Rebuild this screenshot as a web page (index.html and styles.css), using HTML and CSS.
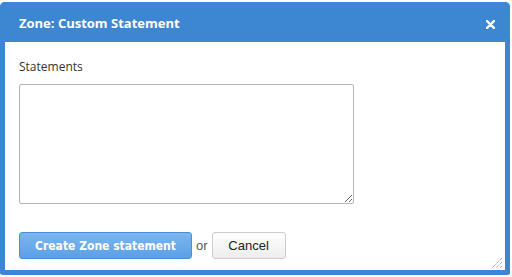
FILE: index.html
```html
<!DOCTYPE html>
<html lang="en">
<head>
    <meta charset="UTF-8">
    <title>Zone: Custom Statement</title>
    <link rel="stylesheet" href="styles.css">
</head>
<body>
    <div class="dialog">
        <div class="dialog-header">
            <span class="dialog-title">Zone: Custom Statement</span>
            <a class="dialog-close" title="Close">
                <svg width="9" height="9" viewBox="0 0 9 9"><path d="M1 1L8 8M8 1L1 8" stroke="#fff" stroke-width="2.4" stroke-linecap="round"/></svg>
            </a>
        </div>
        <div class="dialog-body">
            <label class="field-label" for="statements">Statements</label>
            <textarea id="statements" class="statements"></textarea>
            <div class="actions">
                <button class="btn-primary">Create Zone statement</button>
                <span class="or">or</span>
                <button class="btn-cancel">Cancel</button>
            </div>
            <!-- resize grip in the corner -->
            <svg class="grip" width="12" height="12" viewBox="0 0 12 12">
                <path d="M11 1L1 11M11 5L5 11M11 9L9 11" stroke="#888" stroke-width="1" stroke-dasharray="1 1"/>
            </svg>
        </div>
    </div>
</body>
</html>
```

FILE: styles.css
```css
:root {
    --dialog-blue: #3d87d2;
    --text-color: #333;
}

body {
    margin: 0;
    padding-top: 2px;
    background: #fff;
    font-family: 'Open Sans', sans-serif;
}

.dialog {
    width: 510px;
    height: 273px;
    box-sizing: border-box;
    border: 5px solid var(--dialog-blue);
    border-top: 0;
    border-radius: 5px 5px 3px 3px;
    display: flex;
    flex-direction: column;
    background: #fff;
}

.dialog-header {
    height: 40px;
    background: var(--dialog-blue);
    display: flex;
    align-items: center;
    justify-content: space-between;
    padding: 1px 15px 0 19px;
    box-sizing: border-box;
    margin: 0 -5px;
    border-radius: 5px 5px 0 0;
}

.dialog-title {
    color: #fff;
    font-weight: 700;
    font-size: 13px;
}

.dialog-close {
    display: flex;
    margin-top: 3px;
    cursor: pointer;
}

.dialog-body {
    flex: 1;
    position: relative;
    padding: 17px 14px 0;
    display: flex;
    flex-direction: column;
    align-items: flex-start;
}

.field-label {
    font-size: 12px;
    color: var(--text-color);
    line-height: 16px;
}

.statements {
    margin-top: 9px;
    width: 335px;
    height: 120px;
    box-sizing: border-box;
    border: 1px solid #b5b5b5;
    border-radius: 2px;
}

.actions {
    margin-top: 28px;
    display: flex;
    align-items: center;
}

.btn-primary {
    width: 173px;
    height: 27px;
    border: 1px solid #4a8fd6;
    border-radius: 3px;
    background: linear-gradient(#7bb6ef, #5aa0e6);
    color: #fff;
    font-family: 'DejaVu Sans Condensed', 'DejaVu Sans', sans-serif;
    font-weight: 700;
    font-size: 12px;
    cursor: pointer;
}

.or {
    margin: 0 4px 0 4px;
    font-family: 'Liberation Sans', sans-serif;
    font-size: 13px;
    color: #555;
}

.btn-cancel {
    width: 74px;
    height: 27px;
    border: 1px solid #ccc;
    border-radius: 3px;
    background: linear-gradient(#fff, #ededed);
    color: #222;
    font-family: 'Liberation Sans', sans-serif;
    font-size: 13px;
    cursor: pointer;
}

.grip {
    position: absolute;
    right: 2px;
    bottom: 1px;
}
```
